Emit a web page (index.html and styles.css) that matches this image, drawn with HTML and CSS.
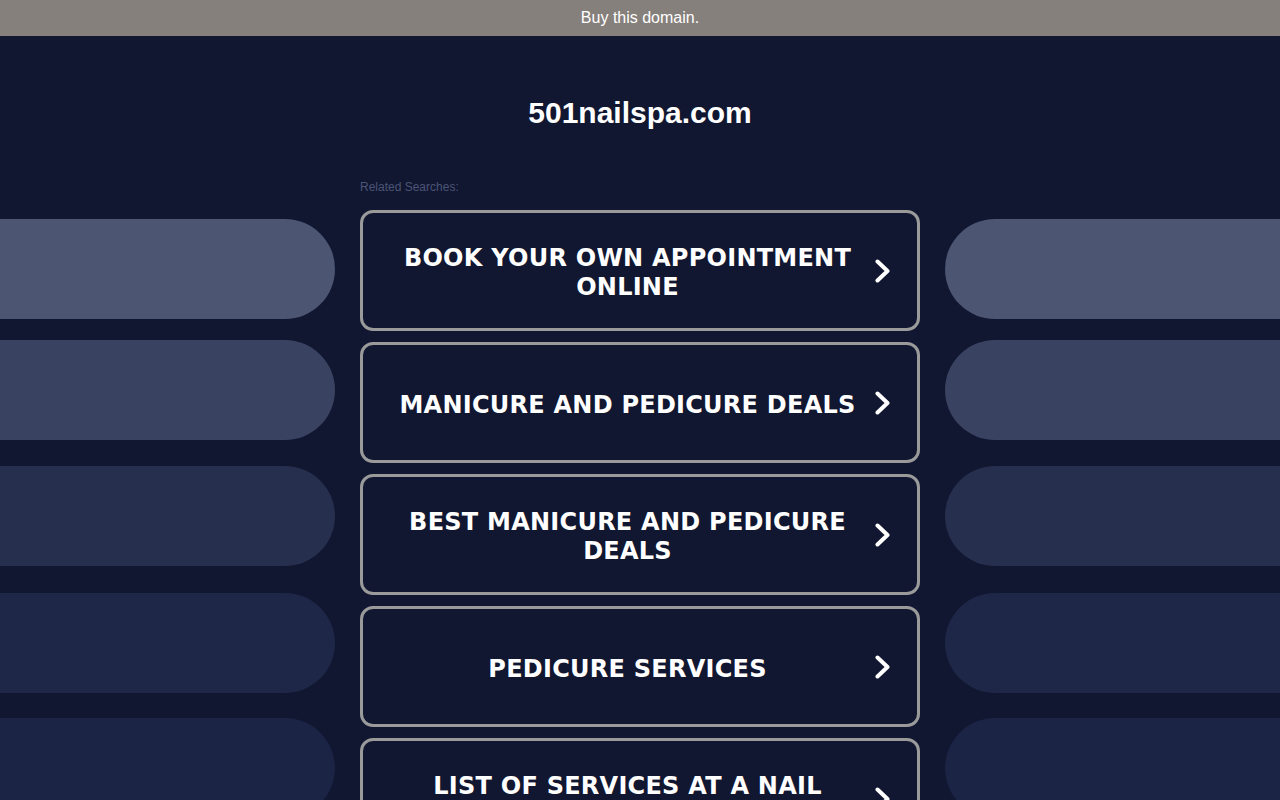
FILE: index.html
```html
<!DOCTYPE html>
<html lang="en">
<head>
<meta charset="utf-8">
<title>501nailspa.com</title>
<link rel="stylesheet" href="styles.css">
</head>
<body>
<div class="topbar">Buy this domain.</div>
<h1 class="title">501nailspa.com</h1>
<div class="main">
  <div class="side side-left">
    <div class="pill pill-1"></div>
    <div class="pill pill-2"></div>
    <div class="pill pill-3"></div>
    <div class="pill pill-4"></div>
    <div class="pill pill-5"></div>
  </div>
  <div class="center">
    <div class="related">Related Searches:</div>
    <div class="list">
      <a class="item" href="#"><span class="label">BOOK YOUR OWN APPOINTMENT ONLINE</span><svg class="chev" viewBox="0 0 15 24" width="15" height="24"><polyline points="2.5,2.5 12.5,12 2.5,21.5" fill="none" stroke="#fff" stroke-width="4" stroke-linecap="round" stroke-linejoin="round"/></svg></a>
      <a class="item" href="#"><span class="label">MANICURE AND PEDICURE DEALS</span><svg class="chev" viewBox="0 0 15 24" width="15" height="24"><polyline points="2.5,2.5 12.5,12 2.5,21.5" fill="none" stroke="#fff" stroke-width="4" stroke-linecap="round" stroke-linejoin="round"/></svg></a>
      <a class="item" href="#"><span class="label">BEST MANICURE AND PEDICURE DEALS</span><svg class="chev" viewBox="0 0 15 24" width="15" height="24"><polyline points="2.5,2.5 12.5,12 2.5,21.5" fill="none" stroke="#fff" stroke-width="4" stroke-linecap="round" stroke-linejoin="round"/></svg></a>
      <a class="item" href="#"><span class="label">PEDICURE SERVICES</span><svg class="chev" viewBox="0 0 15 24" width="15" height="24"><polyline points="2.5,2.5 12.5,12 2.5,21.5" fill="none" stroke="#fff" stroke-width="4" stroke-linecap="round" stroke-linejoin="round"/></svg></a>
      <a class="item" href="#"><span class="label">LIST OF SERVICES AT A NAIL SALON</span><svg class="chev" viewBox="0 0 15 24" width="15" height="24"><polyline points="2.5,2.5 12.5,12 2.5,21.5" fill="none" stroke="#fff" stroke-width="4" stroke-linecap="round" stroke-linejoin="round"/></svg></a>
    </div>
  </div>
  <div class="side side-right">
    <div class="pill pill-1"></div>
    <div class="pill pill-2"></div>
    <div class="pill pill-3"></div>
    <div class="pill pill-4"></div>
    <div class="pill pill-5"></div>
  </div>
</div>
</body>
</html>
```

FILE: styles.css
```css
html {
  overflow: hidden;
}
body {
  margin: 0;
  background: #111730;
  font-family: "Liberation Sans", Arial, sans-serif;
  color: #fff;
}
.topbar {
  height: 36px;
  line-height: 35px;
  background: #86807c;
  color: #fff;
  font-size: 16px;
  text-align: center;
}
.title {
  margin: 59px 0 0;
  height: 36px;
  line-height: 36px;
  font-size: 30px;
  font-weight: bold;
  text-align: center;
  color: #fff;
}
.main {
  display: grid;
  grid-template-columns: 335px 560px 335px;
  column-gap: 25px;
  margin-top: 49px;
}
.side {
  display: flex;
  flex-direction: column;
  padding-top: 39px;
}
.pill {
  height: 100px;
  flex: none;
}
.side-left .pill {
  border-radius: 0 50px 50px 0;
}
.side-right .pill {
  border-radius: 50px 0 0 50px;
}
.pill-1 { background: #4c5673; }
.pill-2 { background: #3a4261; margin-top: 21px; }
.pill-3 { background: #272f4e; margin-top: 26px; }
.pill-4 { background: #1e2747; margin-top: 27px; }
.pill-5 { background: #1c2446; margin-top: 25px; }
.related {
  font-size: 12px;
  line-height: 14px;
  height: 14px;
  color: #4b5477;
}
.list {
  display: flex;
  flex-direction: column;
  gap: 11px;
  margin-top: 16px;
}
.item {
  box-sizing: border-box;
  height: 121px;
  border: 3px solid #9a9a9a;
  border-radius: 13px;
  display: flex;
  align-items: center;
  padding: 0 27px;
  gap: 10px;
  text-decoration: none;
  color: #fff;
  flex: none;
}
.label {
  flex: 1;
  text-align: center;
  font-family: "DejaVu Sans", Verdana, sans-serif;
  font-weight: bold;
  font-size: 24px;
  line-height: 29px;
  letter-spacing: 0.25px;
  padding-top: 5px;
}
.chev {
  flex: none;
  display: block;
}
```
